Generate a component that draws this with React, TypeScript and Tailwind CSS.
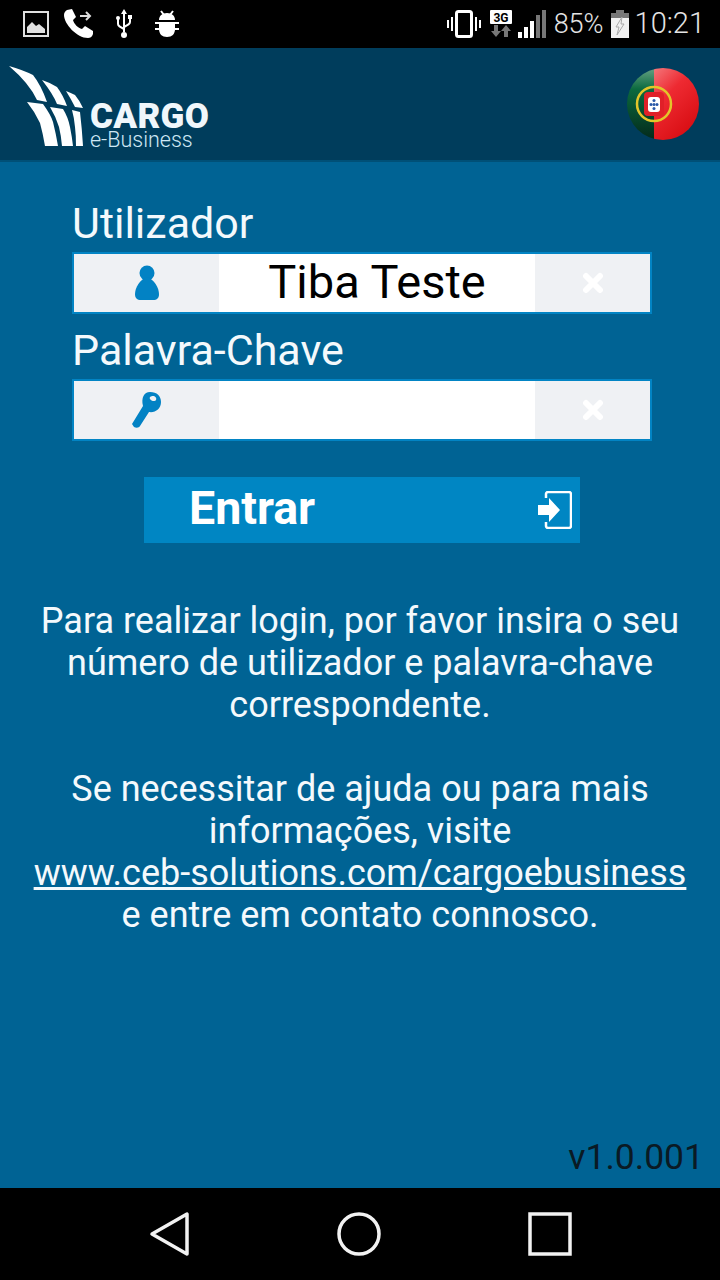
function StatusLeft() {
  return (
    <div className="flex items-center">
      <svg width="26" height="26" viewBox="0 0 26 26" className="ml-[23px]">
        <rect x="1" y="1" width="24" height="24" fill="none" stroke="#e0e0e0" strokeWidth="2" />
        <path d="M4 22V16l5-5 4 4 3-2 6 5v4z" fill="#e0e0e0" />
      </svg>
      <svg width="32" height="30" viewBox="0 0 32 30" className="ml-[14px]">
        <path
          d="M4 1l5-1 4 8-3 3c1 4 5 8 9 9l3-3 8 5 0 3c-1 3-3 4-5 4C14 29 1 15 1 6c0-2 1-4 3-5z"
          fill="#fff"
        />
        <path d="M17 7h10M23 3l4 4-4 4M20 11" fill="none" stroke="#ddd" strokeWidth="2" />
      </svg>
      <svg width="18" height="30" viewBox="0 0 18 30" className="ml-[20px]">
        <path d="M9 0l3 5h-2v18h-2V5H6z" fill="#fff" />
        <circle cx="9" cy="26" r="3" fill="#fff" />
        <path d="M3 10v5c0 2 2 3 6 5M15 9v4c0 2-2 3-6 5" fill="none" stroke="#fff" strokeWidth="2" />
        <circle cx="3" cy="9" r="2" fill="#fff" />
        <rect x="13" y="6" width="4" height="4" fill="#fff" />
      </svg>
      <svg width="24" height="28" viewBox="0 0 24 28" className="ml-[22px]">
        <path d="M6 1l3 4M18 1l-3 4" stroke="#fff" strokeWidth="2" />
        <path d="M4 10c0-4 3-7 8-7s8 3 8 7z" fill="#fff" />
        <path d="M4 12h16v7c0 5-3 8-8 8s-8-3-8-8z" fill="#fff" />
        <path d="M0 13h4M20 13h4M0 19h4M20 19h4" stroke="#fff" strokeWidth="2" />
      </svg>
    </div>
  );
}

function StatusRight() {
  return (
    <div className="flex items-center text-[#e4e4e4] text-[27px] font-light">
      <svg width="34" height="28" viewBox="0 0 34 28" className="mr-[9px]">
        <rect x="9.5" y="1.5" width="15" height="25" rx="2" fill="none" stroke="#fff" strokeWidth="3" />
        <path d="M5 7v14M1 10v8M29 7v14M33 10v8" stroke="#fff" strokeWidth="2" />
      </svg>
      <svg width="22" height="28" viewBox="0 0 22 28" className="mr-[6px]">
        <rect x="0" y="0" width="22" height="14" rx="1" fill="#fff" />
        <text x="11" y="12" textAnchor="middle" fontSize="12" fontWeight="700" fontFamily="Roboto" fill="#000">
          3G
        </text>
        <path d="M4 15h4v6h3l-5 6-5-6h3zM14 27h4v-6h3l-5-6-5 6h3z" fill="#777" />
      </svg>
      <svg width="28" height="28" viewBox="0 0 28 28" className="mr-[8px]">
        <rect x="0" y="22" width="4" height="6" fill="#fff" />
        <rect x="6" y="17" width="4" height="11" fill="#fff" />
        <rect x="12" y="11" width="4" height="17" fill="#fff" />
        <rect x="18" y="5" width="4" height="23" fill="#777" />
        <rect x="24" y="0" width="4" height="28" fill="#777" />
      </svg>
      <span className="mr-[7px]">85%</span>
      <svg width="18" height="28" viewBox="0 0 18 28" className="mr-[6px]">
        <rect x="5" y="0" width="8" height="4" fill="#777" />
        <rect x="0" y="3" width="18" height="5" fill="#777" />
        <rect x="0" y="8" width="18" height="20" fill="#f2f2f2" />
        <path d="M11 7L5 17h3l-2 8 7-11h-3z" fill="none" stroke="#aaa" strokeWidth="1" />
      </svg>
      <span className="mr-[15px] text-[29px]">10:21</span>
    </div>
  );
}

function Logo() {
  return (
    <div className="flex items-end ml-[9px] mt-[17px] text-white">
      <svg width="75" height="82" viewBox="0 0 75 82" className="block">
        <path d="M0 1Q14 5 24 10Q32 20 38 37L28 35Q20 18 0 1z" fill="#fff" />
        <path d="M33 15Q42 18 48 22Q54 30 58 41L48 39Q44 29 33 15z" fill="#fff" />
        <path d="M57 26Q62 28 66 30Q71 36 74 43L66 42Q62 34 57 26z" fill="#fff" />
        <path d="M18 37L34 39Q42 50 44 57Q47 69 49 81L36 81Q34 69 31 58Q26 47 18 37z" fill="#fff" />
        <path d="M41 42L54 44Q59 52 61 62Q63 72 64 81L53 81Q52 70 50 62Q47 52 41 42z" fill="#fff" />
        <path d="M63 45L71 47Q73 64 74 81L67 81Q67 70 66 62Q65 52 63 45z" fill="#fff" />
      </svg>
      <div className="ml-[6px] flex flex-col mb-[-3px]">
        <span className="text-[35px] leading-[26px] font-black tracking-[0.3px] text-[#f0f7fb]">CARGO</span>
        <span className="text-[21.5px] leading-[20px] font-light text-[#cfe8f5]">e-Business</span>
      </div>
    </div>
  );
}

function Flag() {
  return (
    <svg width="74" height="74" viewBox="0 0 74 74" className="mr-[20px] mt-[19px]">
      <defs>
        <linearGradient id="green" x1="0" y1="0" x2="0" y2="1">
          <stop offset="0" stopColor="#6aa487" />
          <stop offset="0.3" stopColor="#0b6a3f" />
          <stop offset="1" stopColor="#03281a" />
        </linearGradient>
        <linearGradient id="red" x1="0" y1="0" x2="0.6" y2="1">
          <stop offset="0" stopColor="#f4787c" />
          <stop offset="0.4" stopColor="#ee2a32" />
          <stop offset="1" stopColor="#d80d12" />
        </linearGradient>
        <clipPath id="ball">
          <circle cx="37" cy="37" r="36" />
        </clipPath>
      </defs>
      <g clipPath="url(#ball)">
        <rect x="0" y="0" width="28" height="74" fill="url(#green)" />
        <rect x="28" y="0" width="46" height="74" fill="url(#red)" />
      </g>
      <circle cx="28" cy="37" r="17" fill="none" stroke="#e3c52a" strokeWidth="2.5" />
      <rect x="18" y="25" width="20" height="24" rx="4" fill="#e02028" />
      <rect x="22" y="30" width="12" height="15" rx="3" fill="#fff" />
      <circle cx="28" cy="33.5" r="1.5" fill="#2a58a8" />
      <circle cx="25" cy="37.5" r="1.5" fill="#2a58a8" />
      <circle cx="31" cy="37.5" r="1.5" fill="#2a58a8" />
      <circle cx="28" cy="37.5" r="1.5" fill="#2a58a8" />
      <circle cx="28" cy="41.5" r="1.5" fill="#2a58a8" />
    </svg>
  );
}

function ClearIcon() {
  return (
    <svg width="22" height="22" viewBox="0 0 22 22">
      <path d="M4 4l14 14M18 4L4 18" stroke="#fff" strokeWidth="6" strokeLinecap="round" />
    </svg>
  );
}

function UserIcon() {
  return (
    <svg width="24" height="36" viewBox="0 0 24 36">
      <circle cx="12" cy="8" r="7.5" fill="#0282c4" />
      <path d="M12 12C5 14 0 23 0 29c0 4 2 6 6 6h12c4 0 6-2 6-6 0-6-5-15-12-17z" fill="#0282c4" />
    </svg>
  );
}

function KeyIcon() {
  return (
    <svg width="30" height="36" viewBox="0 0 30 36">
      <path
        fillRule="evenodd"
        d="M18 0c7 0 11 4 11 10 0 7-6 11-12 10L8 34c-1 2-4 2-6 1l-2-3L11 14C9 6 12 0 18 0zM21 4c-2 0-4 1-3 3 1 2 5 3 6 1 1-2-1-4-3-4z"
        fill="#0282c4"
      />
    </svg>
  );
}

function Field({ icon, value }: { icon: React.ReactNode; value?: string }) {
  return (
    <div className="flex h-[62px] w-[580px] border-2 border-[#0284c4]">
      <div className="w-[145px] flex items-center justify-center bg-[#eff1f4]">{icon}</div>
      <div className="flex-1 bg-white flex items-center justify-center text-black text-[47px] leading-none pb-[4px]">
        {value}
      </div>
      <div className="w-[115px] flex items-center justify-center bg-[#eff1f4]">
        <ClearIcon />
      </div>
    </div>
  );
}

export default function App() {
  return (
    <div className="w-[720px] h-[1280px] flex flex-col bg-[#006394] text-white [font-family:Roboto,sans-serif] overflow-hidden">
      <div className="h-[48px] shrink-0 bg-black flex items-center justify-between">
        <StatusLeft />
        <StatusRight />
      </div>
      <div className="h-[114px] shrink-0 bg-[#003d5c] flex justify-between items-start border-b-2 border-[#005077]">
        <Logo />
        <Flag />
      </div>

      <main className="flex-1 flex flex-col">
        <div className="pl-[72px] flex flex-col">
          <label className="text-[43px] leading-[47px] mt-[38px] mb-[5px] text-[#f4f9fc]">Utilizador</label>
          <Field icon={<UserIcon />} value="Tiba Teste" />
          <label className="text-[43px] leading-[47px] mt-[13px] mb-[5px] text-[#f4f9fc]">Palavra-Chave</label>
          <Field icon={<KeyIcon />} />
        </div>

        <button className="ml-[144px] mt-[36px] w-[436px] h-[66px] bg-[#0086c3] flex items-center justify-between pl-[45px] pr-[8px]">
          <span className="text-[46.5px] font-bold leading-none text-white pb-[4px]">Entrar</span>
          <svg width="34" height="38" viewBox="0 0 34 38">
            <path d="M8 7V3c0-1 1-2 2-2h21c1 0 2 1 2 2v32c0 1-1 2-2 2H10c-1 0-2-1-2-2v-4" fill="none" stroke="#fff" strokeWidth="2.5" />
            <path d="M0 14h11V7l11 12-11 12v-7H0z" fill="#fff" />
          </svg>
        </button>

        <div className="mt-[57px] text-center text-[36px] leading-[42px] text-[#f4f9fc]">
          <p>
            Para realizar login, por favor insira o seu
            <br />
            número de utilizador e palavra-chave
            <br />
            correspondente.
          </p>
          <p className="mt-[42px]">
            Se necessitar de ajuda ou para mais
            <br />
            informações, visite
            <br />
            <a className="underline">www.ceb-solutions.com/cargoebusiness</a>
            <br />e entre em contato connosco.
          </p>
        </div>

        <div className="mt-auto mb-[10px] pr-[16px] text-right text-[35.5px] leading-[42px] text-[#0a1a24]">v1.0.001</div>
      </main>

      <div className="h-[92px] shrink-0 bg-black flex items-center">
        <svg width="42" height="46" viewBox="0 0 42 46" className="ml-[149px]">
          <path d="M38 3v40L3 23z" fill="none" stroke="#f2f2f2" strokeWidth="3.5" strokeLinejoin="round" />
        </svg>
        <svg width="44" height="44" viewBox="0 0 44 44" className="ml-[146px]">
          <circle cx="22" cy="22" r="20" fill="none" stroke="#f2f2f2" strokeWidth="3.5" />
        </svg>
        <svg width="44" height="44" viewBox="0 0 44 44" className="ml-[147px]">
          <rect x="2" y="2" width="40" height="40" fill="none" stroke="#f2f2f2" strokeWidth="3.5" />
        </svg>
      </div>
    </div>
  );
}
